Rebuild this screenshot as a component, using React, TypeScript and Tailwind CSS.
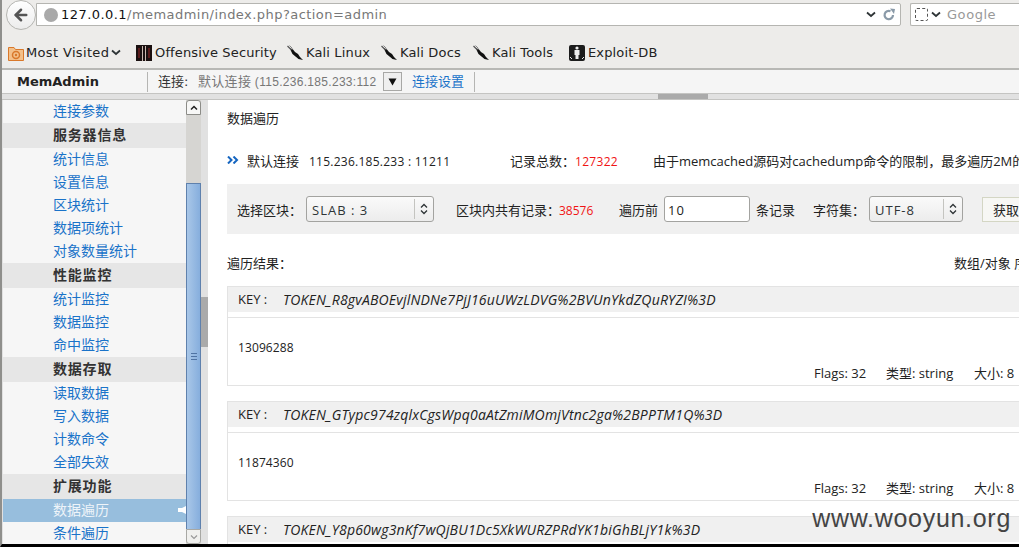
import { ArrowLeft } from "lucide-react";

const cjk = "font-['DejaVu_Sans','Noto_Sans_CJK_SC',sans-serif]";
const body = "font-['Open_Sans','Noto_Sans_CJK_SC',sans-serif]";

const menu: { title?: string; items: string[] }[] = [
  { items: ["连接参数"] },
  { title: "服务器信息", items: ["统计信息", "设置信息", "区块统计", "数据项统计", "对象数量统计"] },
  { title: "性能监控", items: ["统计监控", "数据监控", "命中监控"] },
  { title: "数据存取", items: ["读取数据", "写入数据", "计数命令", "全部失效"] },
  { title: "扩展功能", items: ["数据遍历", "条件遍历"] },
];

const records = [
  { key: "TOKEN_R8gvABOEvjlNDNe7PjJ16uUWzLDVG%2BVUnYkdZQuRYZI%3D", value: "13096288" },
  { key: "TOKEN_GTypc974zqlxCgsWpq0aAtZmiMOmjVtnc2ga%2BPPTM1Q%3D", value: "11874360" },
  { key: "TOKEN_Y8p60wg3nKf7wQjBU1Dc5XkWURZPRdYK1biGhBLjY1k%3D", value: "" },
];

function KaliIcon() {
  return (
    <svg width="16" height="16" viewBox="0 0 16 16" className="shrink-0">
      <path d="M3 3 L6 4.5 L8 7 L11 9 L13 12 L16 15 L11.5 14 L8.5 11.5 L5.5 9 L4 6 Z" fill="#111" />
      <path d="M0.5 1 L4.5 5" stroke="#555" strokeWidth="1.2" />
      <path d="M2.5 0.5 L5.5 3.5" stroke="#888" strokeWidth="1" />
    </svg>
  );
}

function FolderIcon() {
  return (
    <svg width="16" height="16" viewBox="0 0 16 16" className="shrink-0">
      <path d="M0.5 2.5 H6 L7.5 4.5 H15.5 V15.5 H0.5 Z" fill="#f3c08a" stroke="#d9782a" />
      <circle cx="8" cy="10" r="3.5" fill="none" stroke="#d9782a" strokeWidth="1.5" />
      <circle cx="8" cy="10" r="1.2" fill="#d9782a" />
    </svg>
  );
}

function OffsecIcon() {
  return (
    <svg width="16" height="16" viewBox="0 0 16 16" className="shrink-0">
      <rect width="16" height="16" fill="#1a1010" />
      <rect x="6" y="1" width="1" height="15" fill="#c9b8b0" />
      <rect x="9" y="1" width="1" height="15" fill="#c9b8b0" />
      <rect x="2" y="3" width="2" height="10" fill="#5a1c1c" />
      <rect x="12" y="3" width="2" height="10" fill="#5a1c1c" />
    </svg>
  );
}

function ExploitIcon() {
  return (
    <svg width="16" height="16" viewBox="0 0 16 16" className="shrink-0">
      <rect width="16" height="16" rx="2" fill="#1c1c1c" />
      <circle cx="8" cy="3" r="1.6" fill="#eee" />
      <path d="M5.5 5 H10.5 V10 H9.5 V14 H6.5 V10 H5.5 Z" fill="#eee" />
      <path d="M1 12 L3 14 M15 12 L13 14" stroke="#eee" />
    </svg>
  );
}

function Bookmark({ icon, label, width }: { icon: React.ReactNode; label: string; width: string }) {
  return (
    <div className={`flex items-center gap-[3px] ${width}`}>
      {icon}
      <span className="whitespace-nowrap">{label}</span>
    </div>
  );
}

function Chevron({ className = "" }: { className?: string }) {
  return (
    <svg width="10" height="7" viewBox="0 0 10 7" className={className}>
      <path d="M1 1.5 L5 5 L9 1.5" fill="none" stroke="#2e3436" strokeWidth="1.8" />
    </svg>
  );
}

function SelectBox({ text, width }: { text: string; width: string }) {
  return (
    <div className={`flex h-[26px] items-center rounded-[3px] border border-[#a3a3a0] bg-gradient-to-b from-[#fafafa] to-[#ececec] ${width}`}>
      <span className="flex-1 pl-[5px] pt-[3px] tracking-[1px] text-[13px] text-[#2e3436]">{text}</span>
      <div className="flex h-[20px] w-[19px] items-center justify-center border-l border-[#c4c4c0]">
        <svg width="8" height="12" viewBox="0 0 8 12">
          <path d="M1 4.5 L4 1.5 L7 4.5 M1 7.5 L4 10.5 L7 7.5" fill="none" stroke="#2e3436" strokeWidth="1.3" />
        </svg>
      </div>
    </div>
  );
}

function Sidebar() {
  return (
    <div className={`flex w-[183px] shrink-0 flex-col bg-[#f6f6f6] text-[14px] ${cjk}`}>
      {menu.map((group, i) => (
        <div key={i}>
          {group.title && (
            <div className="flex h-[25px] items-center bg-[#e6e6e6] pl-[50px] font-bold tracking-[0.8px] text-[#333]">
              {group.title}
            </div>
          )}
          {group.items.map((item) => {
            const active = item === "数据遍历";
            return (
              <div
                key={item}
                className={`relative flex h-[23px] items-center pl-[50px] ${active ? "bg-[#97bedd] text-[#eef4f9]" : "text-[#1a73c9]"}`}
              >
                {item}
                {active && (
                  <svg width="8" height="8" viewBox="0 0 8 8" className="absolute right-0 top-[7px]">
                    <path d="M0 2 H4 L8 0 V8 L4 6 H0 Z" fill="#fff" />
                  </svg>
                )}
              </div>
            );
          })}
        </div>
      ))}
    </div>
  );
}

function Scrollbar() {
  return (
    <div className="flex w-[15px] shrink-0 flex-col bg-[#d6d5d2]">
      <div className="flex h-[15px] items-center justify-center rounded-t-[3px] border border-[#8c8c88] bg-[#f7f7f6]">
        <svg width="8" height="6" viewBox="0 0 8 6">
          <path d="M1 4.5 L4 1.5 L7 4.5" fill="none" stroke="#222" strokeWidth="1.5" />
        </svg>
      </div>
      <div className="h-[68px]" />
      <div className="flex flex-1 items-center justify-center border-x border-t border-[#5f81ad] bg-gradient-to-r from-[#a9c7e8] to-[#86aedd]">
        <div className="flex w-[6px] flex-col gap-[2px]">
          <div className="h-px bg-[#4f73a3]" />
          <div className="h-px bg-[#4f73a3]" />
          <div className="h-px bg-[#4f73a3]" />
        </div>
      </div>
      <div className="flex h-[15px] items-center justify-center rounded-b-[3px] border border-[#a8a8a4] bg-[#f0f0ee]">
        <svg width="8" height="6" viewBox="0 0 8 6">
          <path d="M1 1.5 L4 4.5 L7 1.5" fill="none" stroke="#999" strokeWidth="1.2" />
        </svg>
      </div>
    </div>
  );
}

function RecordCard({ recordKey, value }: { recordKey: string; value: string }) {
  return (
    <div className="mb-[15px] h-[100px] w-[900px] shrink-0 border border-[#e3e3e3]">
      <div className="flex h-[25px] items-center whitespace-nowrap bg-[#f0f0f0] pl-[10px] text-[#222]">
        <span className="w-[45px]">KEY :</span>
        <span className="text-[14px] italic tracking-[0.2px]">{recordKey}</span>
      </div>
      <div className="mt-[5px] border-t border-[#e3e3e3] pl-[10px]">
        <div className="flex h-[46px] items-center pt-[14px] text-[12px] tracking-[0.1px]">{value}</div>
        <div className="flex h-[19px] items-center pl-[576px] whitespace-nowrap">
          <span className="w-[72px]">Flags: 32</span>
          <span className="w-[88px]">类型: string</span>
          <span>大小: 8</span>
        </div>
      </div>
    </div>
  );
}

function Main() {
  return (
    <div className={`min-w-0 flex-1 overflow-hidden bg-white pl-[19px] text-[13px] text-[#222] ${body}`}>
      <div className="flex h-[31px] w-[900px] items-center pt-[7px]">数据遍历</div>
      <div className="flex h-[53px] w-[900px] items-center whitespace-nowrap pt-[9px]">
        <svg width="12" height="8" viewBox="0 0 12 8" className="mr-[8px] mt-[-5px] shrink-0">
          <path d="M1 0.5 L4.5 4 L1 7.5 M6.5 0.5 L10 4 L6.5 7.5" fill="none" stroke="#1565c0" strokeWidth="2" />
        </svg>
        <span className="w-[62px]">默认连接</span>
        <span className="w-[201px] text-[12px] tracking-[0.25px]">115.236.185.233 : 11211</span>
        <span className="w-[65px]">记录总数：</span>
        <span className="w-[78px] text-[12px] tracking-[0.3px] text-[#f01414]">127322</span>
        <span>由于memcached源码对cachedump命令的限制，最多遍历2M的数据</span>
      </div>
      <div className="flex h-[50px] w-[900px] items-center whitespace-nowrap bg-[#f0f0f0] pl-[10px]">
        <span className="w-[69px] pt-[4px]">选择区块：</span>
        <SelectBox text="SLAB : 3" width="w-[128px]" />
        <span className="ml-[22px] w-[103px] pt-[4px]">区块内共有记录：</span>
        <span className="w-[60px] pt-[4px] text-[12px] text-[#f01414]">38576</span>
        <span className="w-[45px] pt-[4px]">遍历前</span>
        <div className="flex h-[26px] w-[86px] items-center rounded-[3px] border border-[#a3a3a0] bg-white pl-[3px] pt-[3px] tracking-[1px] text-[13px]">
          10
        </div>
        <span className="ml-[6px] w-[57px] pt-[4px]">条记录</span>
        <span className="w-[56px] pt-[4px]">字符集：</span>
        <SelectBox text="UTF-8" width="w-[94px]" />
        <div className="ml-[19px] flex h-[25px] w-[60px] items-center border border-[#d4d6c4] bg-[#f7f7f4] pl-[10px] pt-[3px] text-[13px]">
          获取
        </div>
      </div>
      <div className="flex h-[52px] w-[900px] items-center justify-between whitespace-nowrap pr-[7px] pt-[7px]">
        <span>遍历结果：</span>
        <span className="w-[166px]">数组/对象 序列化</span>
      </div>
      {records.map((r) => (
        <RecordCard key={r.key} recordKey={r.key} value={r.value} />
      ))}
    </div>
  );
}

export default function App() {
  return (
    <div className={`flex h-[547px] w-[1019px] flex-col overflow-hidden bg-[#edecea] border-l-2 border-[#8f8f8c] border-b-[3px] border-b-black ${cjk}`}>
      {/* browser toolbar */}
      <div className="relative flex h-[37px] shrink-0 items-start pl-[34px] pt-[3px]">
        <div className="flex h-[23px] w-[865px] items-center rounded-r-[2px] border border-[#b5b5b1] bg-white pl-[7px] pr-[4px]">
          <div className="mr-[3px] h-[14px] w-[14px] shrink-0 rounded-full bg-[#a9a9a9]" />
          <span className="flex-1 whitespace-nowrap text-[13px] tracking-[0.45px] text-[#777]">
            <span className="text-[#111]">127.0.0.1</span>/memadmin/index.php?action=admin
          </span>
          <Chevron className="mr-[6px]" />
          <svg width="14" height="14" viewBox="0 0 14 14">
            <path d="M11 7 A4.2 4.2 0 1 1 8.5 3.2" fill="none" stroke="#8a9aa8" strokeWidth="2.2" />
            <path d="M8 0.5 L13 1 L12 6 Z" fill="#8a9aa8" />
          </svg>
        </div>
        <div className="ml-[9px] flex h-[23px] flex-1 items-center rounded-l-[2px] border border-r-0 border-[#b5b5b1] bg-white pl-[4px]">
          <div className="h-[13px] w-[13px] rounded-[2px] border border-dashed border-[#555]" />
          <Chevron className="ml-[3px]" />
          <span className="ml-[6px] text-[13px] tracking-[0.55px] text-[#999]">Google</span>
        </div>
        <div className="absolute left-[4px] top-0 flex h-[30px] w-[30px] items-center justify-center rounded-full border border-[#b5b5b1] bg-gradient-to-b from-white to-[#ececec]">
          <ArrowLeft size={18} strokeWidth={3.4} color="#555" />
        </div>
      </div>

      {/* bookmarks */}
      <div className="flex h-[33px] shrink-0 items-center border-b-2 border-[#b8b8b5] pl-[6px] text-[13px] tracking-[0.15px] text-[#222]">
        <div className="flex w-[128px] items-center gap-[2px]">
          <FolderIcon />
          <span className="whitespace-nowrap tracking-[0.35px]">Most Visited</span>
          <Chevron />
        </div>
        <Bookmark icon={<OffsecIcon />} label="Offensive Security" width="w-[151px]" />
        <Bookmark icon={<KaliIcon />} label="Kali Linux" width="w-[94px]" />
        <Bookmark icon={<KaliIcon />} label="Kali Docs" width="w-[92px]" />
        <Bookmark icon={<KaliIcon />} label="Kali Tools" width="w-[96px]" />
        <Bookmark icon={<ExploitIcon />} label="Exploit-DB" width="w-[100px]" />
      </div>

      {/* app header */}
      <div className="flex h-[24px] shrink-0 items-center border-b border-[#c4c4c2] bg-[#f5f5f5] text-[13px] text-[#333]">
        <div className="flex h-[20px] w-[146px] items-center border-r border-[#b5b5b3] pl-[15px] text-[13px] font-bold text-[#222]">
          MemAdmin
        </div>
        <span className="ml-[10px] w-[40px]">连接:</span>
        <span className="w-[185px] whitespace-nowrap font-['Liberation_Sans','Noto_Sans_CJK_SC',sans-serif] text-[12px] tracking-[0.3px] text-[#777]">
          <span className="text-[13px]">默认连接</span> (115.236.185.233:112
        </span>
        <div className="flex h-[19px] w-[19px] items-center justify-center border border-[#a8a8a6] bg-[#efefef]">
          <svg width="9" height="8" viewBox="0 0 9 8">
            <path d="M0.5 0.5 H8.5 L4.5 7.5 Z" fill="#111" />
          </svg>
        </div>
        <div className="ml-[10px] flex h-[20px] w-[63px] items-center border-r border-[#b5b5b3] text-[#1a73c9]">
          连接设置
        </div>
      </div>

      {/* splitter */}
      <div className="flex h-[6px] shrink-0 border-b border-[#c4c4c2] bg-[#e1e1e1] pl-[656px]">
        <div className="h-full w-[50px] bg-[#aaa]" />
      </div>

      <div className="relative flex min-h-0 flex-1 bg-[#e1e1e1]">
        <div className="flex w-[199px] shrink-0 pl-px">
          <Sidebar />
          <Scrollbar />
        </div>
        <div className="flex w-[7px] shrink-0 flex-col bg-[#e1e1e1] pt-[197px]">
          <div className="h-[50px] bg-[#aaa]" />
        </div>
        <Main />
        <div className="absolute bottom-[10px] right-[8px] whitespace-nowrap text-[25px] leading-[32px] text-[#444] font-['Liberation_Sans',sans-serif] tracking-[0.7px]">
          www.wooyun.org
        </div>
      </div>
    </div>
  );
}
